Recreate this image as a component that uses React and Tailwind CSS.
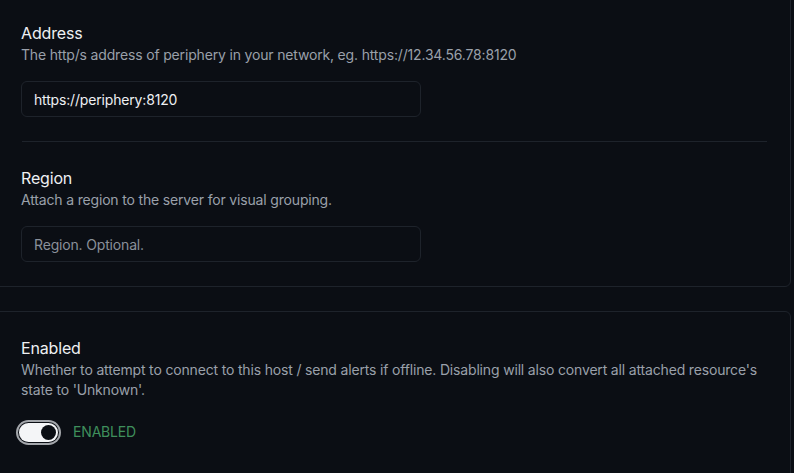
import { useState } from "react";

const FONT = { fontFamily: "Inter, 'Noto Sans', sans-serif" };

function Field({ title, description, children }) {
  return (
    <div className="flex flex-col">
      <div className="text-base leading-6 tracking-[-0.01em] text-[#eef0f3]">{title}</div>
      <p className="text-sm leading-5 tracking-[-0.012em] text-[#9aa0aa]">{description}</p>
      <div className="mt-4">{children}</div>
    </div>
  );
}

function TextInput({ value, placeholder }) {
  return (
    <input
      type="text"
      defaultValue={value}
      placeholder={placeholder}
      className="w-[400px] h-[36px] rounded-md border border-[#1e232b] bg-transparent px-3 text-sm tracking-[-0.012em] text-[#eef0f3] placeholder:text-[#8a909a] outline-none"
    />
  );
}

function Toggle({ on, onChange }) {
  return (
    <button
      onClick={() => onChange(!on)}
      className="ml-[-2px] flex items-center rounded-full ring-2 ring-[#a3a6ab] ring-offset-1 ring-offset-[#0b0e14]"
    >
      <span className={`flex h-[19px] w-[39px] items-center rounded-full px-[2px] ${on ? "justify-end bg-[#f4f5f7]" : "justify-start bg-[#2a2f38]"}`}>
        <span className="h-[15px] w-[15px] rounded-full bg-[#0b0e14]" />
      </span>
    </button>
  );
}

export default function App() {
  const [enabled, setEnabled] = useState(true);

  return (
    <div className="h-[473px] w-[794px] overflow-hidden bg-[#0b0e14]" style={FONT}>
      <div className="-mt-[20px] -ml-[10px] w-[801px] flex flex-col gap-[24px]">
        <div className="rounded-md border border-[#1e232b] pt-[40px] pb-[24px] pl-[30px] pr-[23px]">
          <Field
            title="Address"
            description="The http/s address of periphery in your network, eg. https://12.34.56.78:8120"
          >
            <TextInput value="https://periphery:8120" />
          </Field>
          <div className="my-[24px] ml-px h-px bg-[#1e232b]" />
          <Field title="Region" description="Attach a region to the server for visual grouping.">
            <TextInput placeholder="Region. Optional." />
          </Field>
        </div>

        <div className="rounded-md border border-[#1e232b] pt-[24px] pb-[40px] pl-[30px] pr-[23px]">
          <Field
            title="Enabled"
            description="Whether to attempt to connect to this host / send alerts if offline. Disabling will also convert all attached resource's state to 'Unknown'."
          >
            <div className="mt-[6px] flex items-center gap-[15px]">
              <Toggle on={enabled} onChange={setEnabled} />
              <span className="text-sm tracking-[-0.012em] text-[#3f8f5c] uppercase">{enabled ? "Enabled" : "Disabled"}</span>
            </div>
          </Field>
        </div>
      </div>
    </div>
  );
}
